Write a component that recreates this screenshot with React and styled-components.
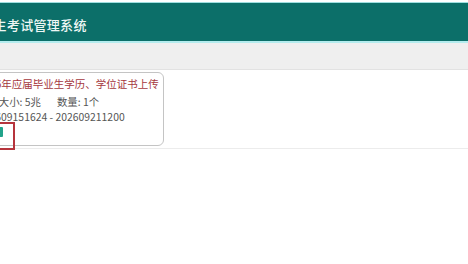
import styled, { createGlobalStyle } from "styled-components";

const GlobalStyle = createGlobalStyle`
    html, body {
        margin: 0;
        padding: 0;
        background: #ffffff;
    }
    body {
        font-family: "Noto Sans CJK SC", "Noto Sans", sans-serif;
    }
`;

const App = () => {
    return (
        <Page>
            <GlobalStyle />
            <Header>
                <Title>研究生考试管理系统</Title>
            </Header>
            <Band />
            <Content>
                <Card>
                    <Heading>2026年应届毕业生学历、学位证书上传</Heading>
                    <Meta>
                        <span>文件大小: 5兆</span>
                        <span>数量: 1个</span>
                    </Meta>
                    <Meta $tight>202609151624 - 202609211200</Meta>
                    <Actions>
                        <UploadButton>上传</UploadButton>
                        <Highlight />
                    </Actions>
                </Card>
            </Content>
        </Page>
    );
};

const Page = styled.div`
    width: 468px;
    height: 264px;
    overflow: hidden;
    background: #fff;
`;

const Header = styled.header`
    margin-top: 2px;
    height: 41px;
    background: #0c6f69;
    border-top: 1px solid #9fdfe0;
    border-bottom: 2px solid #b4ecee;
    display: flex;
    align-items: center;
    padding-top: 4px;
    box-sizing: border-box;
`;

const Title = styled.h1`
    margin: 0 0 0 -33px;
    font-size: 13px;
    font-weight: 500;
    color: #eef7f5;
    letter-spacing: 0.3px;
    white-space: nowrap;
`;

const Band = styled.div`
    height: 26px;
    background: #efefef;
`;

const Content = styled.main`
    height: 76px;
    border-top: 1px solid #e2e2e2;
    border-bottom: 1px solid #ececec;
    padding-top: 2px;
`;

const Card = styled.section`
    position: relative;
    width: 202px;
    height: 74px;
    margin-left: -38px;
    border: 1px solid #c4c4c4;
    border-radius: 6px;
    padding: 3px 0 0 15px;
    box-sizing: border-box;
    background: #fff;
`;

const Heading = styled.div`
    font-size: 10.5px;
    line-height: 16px;
    color: #a5373d;
    white-space: nowrap;
`;

const Meta = styled.div`
    display: flex;
    gap: 16px;
    font-size: 10.4px;
    line-height: 16px;
    margin-top: ${(p) => (p.$tight ? "-1px" : "2px")};
    color: #555;
    white-space: nowrap;
`;

const Actions = styled.div`
    position: relative;
    margin-top: 2px;
    height: 10px;
`;

const UploadButton = styled.button`
    display: block;
    height: 10px;
    width: 25px;
    padding: 0;
    border: none;
    border-radius: 1px;
    background: #22a38a;
    color: transparent;
    font-size: 1px;
`;

const Highlight = styled.div`
    position: absolute;
    left: -4px;
    top: -5px;
    width: 41px;
    height: 28px;
    border: 2px solid #b6343c;
    box-sizing: border-box;
`;

export default App;
